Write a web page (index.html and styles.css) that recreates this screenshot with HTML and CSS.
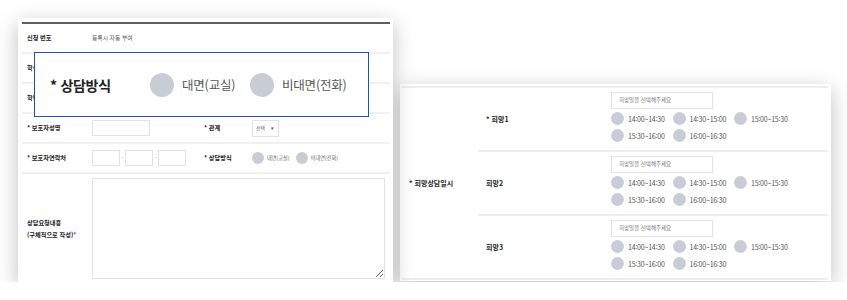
FILE: index.html
```html
<!DOCTYPE html>
<html lang="ko">
<head>
<meta charset="utf-8">
<title>상담 신청</title>
<link rel="stylesheet" href="styles.css">
</head>
<body>
<div class="page">
  <section class="card card-left">
    <div class="form">
      <div class="row">
        <div class="th">신청 번호</div>
        <div class="td wide muted">등록시 자동 부여</div>
      </div>
      <div class="row">
        <div class="th">학생명</div>
        <div class="td wide"></div>
      </div>
      <div class="row">
        <div class="th">학년반</div>
        <div class="td wide"></div>
      </div>
      <div class="row">
        <div class="th">* 보호자성명</div>
        <div class="td"><input class="inp inp-name" type="text"></div>
        <div class="th">* 관계</div>
        <div class="td"><span class="select">선택<span class="caret">▾</span></span></div>
      </div>
      <div class="row">
        <div class="th">* 보호자연락처</div>
        <div class="td phone">
          <input class="inp inp-tel" type="text"><span class="dash">-</span><input class="inp inp-tel" type="text"><span class="dash">-</span><input class="inp inp-tel" type="text">
        </div>
        <div class="th">* 상담방식</div>
        <div class="td radios-sm">
          <span class="opt-sm"><span class="dot dot-sm"></span>대면(교실)</span>
          <span class="opt-sm"><span class="dot dot-sm"></span>비대면(전화)</span>
        </div>
      </div>
      <div class="row row-text">
        <div class="th th-multi">상담요청내용<br>(구체적으로 작성)<span class="red">*</span></div>
        <div class="td wide"><textarea class="memo"></textarea></div>
      </div>
    </div>

    <div class="callout">
      <div class="callout-label">* 상담방식</div>
      <span class="opt-lg"><span class="dot dot-lg"></span>대면(교실)</span>
      <span class="opt-lg"><span class="dot dot-lg"></span>비대면(전화)</span>
    </div>
  </section>

  <section class="card card-right">
    <div class="sched">
      <div class="sched-label">* 희망상담일시</div>
      <div class="sched-rows">
        <div class="sub">
          <div class="sub-label">* 희망1</div>
          <div class="sub-val">
            <div class="date">희망일을 선택해주세요</div>
            <div class="times">
              <span class="time"><span class="dot dot-md"></span>14:00~14:30</span>
              <span class="time"><span class="dot dot-md"></span>14:30~15:00</span>
              <span class="time"><span class="dot dot-md"></span>15:00~15:30</span>
              <span class="time"><span class="dot dot-md"></span>15:30~16:00</span>
              <span class="time"><span class="dot dot-md"></span>16:00~16:30</span>
            </div>
          </div>
        </div>
        <div class="sub">
          <div class="sub-label">희망2</div>
          <div class="sub-val">
            <div class="date">희망일을 선택해주세요</div>
            <div class="times">
              <span class="time"><span class="dot dot-md"></span>14:00~14:30</span>
              <span class="time"><span class="dot dot-md"></span>14:30~15:00</span>
              <span class="time"><span class="dot dot-md"></span>15:00~15:30</span>
              <span class="time"><span class="dot dot-md"></span>15:30~16:00</span>
              <span class="time"><span class="dot dot-md"></span>16:00~16:30</span>
            </div>
          </div>
        </div>
        <div class="sub">
          <div class="sub-label">희망3</div>
          <div class="sub-val">
            <div class="date">희망일을 선택해주세요</div>
            <div class="times">
              <span class="time"><span class="dot dot-md"></span>14:00~14:30</span>
              <span class="time"><span class="dot dot-md"></span>14:30~15:00</span>
              <span class="time"><span class="dot dot-md"></span>15:00~15:30</span>
              <span class="time"><span class="dot dot-md"></span>15:30~16:00</span>
              <span class="time"><span class="dot dot-md"></span>16:00~16:30</span>
            </div>
          </div>
        </div>
      </div>
    </div>
  </section>
</div>
</body>
</html>
```

FILE: styles.css
```css
* {
  box-sizing: border-box;
  margin: 0;
  padding: 0;
}

html, body {
  background: #ffffff;
}

body {
  font-family: "Noto Sans CJK KR", "Noto Sans", sans-serif;
  color: #333;
  overflow: hidden;
}

.page {
  display: flex;
  align-items: flex-start;
  gap: 7px;
  padding: 18px 0 0 18px;
}

.card {
  background: #fff;
  box-shadow: 0 6px 20px rgba(0, 0, 0, 0.26);
}

/* ---------- left card ---------- */
.card-left {
  position: relative;
  width: 375px;
  height: 264px;
  padding: 4px 3px 0 4px;
}

.form {
  border-top: 2px solid #5f5f5f;
}

.row {
  display: grid;
  grid-template-columns: 65px 112px 48px 1fr;
  align-items: center;
  height: 30px;
  padding-left: 5px;
  border-bottom: 2px solid #f0f0f0;
  font-size: 6.2px;
  line-height: 1.3;
}

.th {
  font-weight: 700;
  color: #222;
  white-space: nowrap;
}

.td {
  display: flex;
  align-items: center;
  color: #555;
}

.wide {
  grid-column: 2 / -1;
}

.muted {
  font-size: 5.8px;
  color: #555;
}

.inp {
  display: block;
  border: 1px solid #e2e2e2;
  background: #fff;
  height: 16px;
  outline: none;
}

.inp-name {
  width: 58px;
}

.inp-tel {
  width: 28px;
}

.dash {
  width: 5px;
  text-align: center;
  color: #999;
  font-size: 6px;
}

.select {
  display: flex;
  align-items: center;
  justify-content: space-between;
  width: 27px;
  height: 17px;
  padding: 0 4px 0 3px;
  border: 1px solid #e2e2e2;
  font-size: 4.8px;
  color: #555;
}

.caret {
  font-size: 5px;
  color: #444;
}

.opt-sm {
  display: flex;
  align-items: center;
  gap: 3px;
  font-size: 5.2px;
  color: #666;
  margin-right: 6px;
}

.dot {
  display: inline-block;
  flex: none;
  border-radius: 50%;
  background: #c8cdd5;
}

.dot-sm {
  width: 12px;
  height: 12px;
}

.row-text {
  height: 108px;
  border-bottom: none;
  align-items: start;
  padding-top: 4px;
}

.th-multi {
  align-self: center;
  line-height: 2;
  margin-top: -2px;
}

.red {
  color: #e0282e;
}

.memo {
  display: block;
  width: 293px;
  height: 101px;
  border: 1px solid #e2e2e2;
  resize: both;
  outline: none;
}

/* callout */
.callout {
  position: absolute;
  left: 16px;
  top: 34px;
  width: 335px;
  height: 65px;
  display: flex;
  align-items: center;
  padding-left: 15px;
  background: #fff;
  border: 1.5px solid #1c549f;
}

.callout-label {
  width: 100px;
  font-size: 14px;
  font-weight: 700;
  color: #222;
  letter-spacing: -0.3px;
}

.opt-lg {
  display: flex;
  align-items: center;
  gap: 8px;
  width: 100px;
  font-size: 12.5px;
  color: #555;
  letter-spacing: -0.2px;
}

.dot-lg {
  width: 24px;
  height: 24px;
}

/* ---------- right card ---------- */
.card-right {
  width: 431px;
  height: 197px;
  margin-top: 66px;
  padding: 2px 3px 1px 2px;
}

.sched {
  display: grid;
  grid-template-columns: 76px 1fr;
  border-top: 2px solid #eeeeee;
  border-bottom: 2px solid #eeeeee;
}

.sched-label {
  align-self: center;
  padding-left: 7px;
  font-size: 7px;
  font-weight: 700;
  color: #222;
}

.sub {
  display: grid;
  grid-template-columns: 133px 1fr;
  height: 62px;
}

.sub + .sub {
  height: 64px;
  border-top: 2px solid #eeeeee;
}

.sub-label {
  align-self: center;
  padding-left: 8px;
  font-size: 7px;
  font-weight: 700;
  color: #222;
}

.sub-val {
  padding-top: 4px;
}

.date {
  width: 102px;
  height: 17px;
  border: 1px solid #e2e2e2;
  padding-left: 7px;
  font-size: 5.5px;
  line-height: 15px;
  color: #777;
}

.times {
  display: flex;
  flex-wrap: wrap;
  margin-top: 1px;
}

.time {
  display: flex;
  align-items: center;
  gap: 4px;
  width: 61.5px;
  height: 17px;
  font-size: 7px;
  color: #555;
  letter-spacing: -0.2px;
}

.dot-md {
  width: 13px;
  height: 13px;
}
```
